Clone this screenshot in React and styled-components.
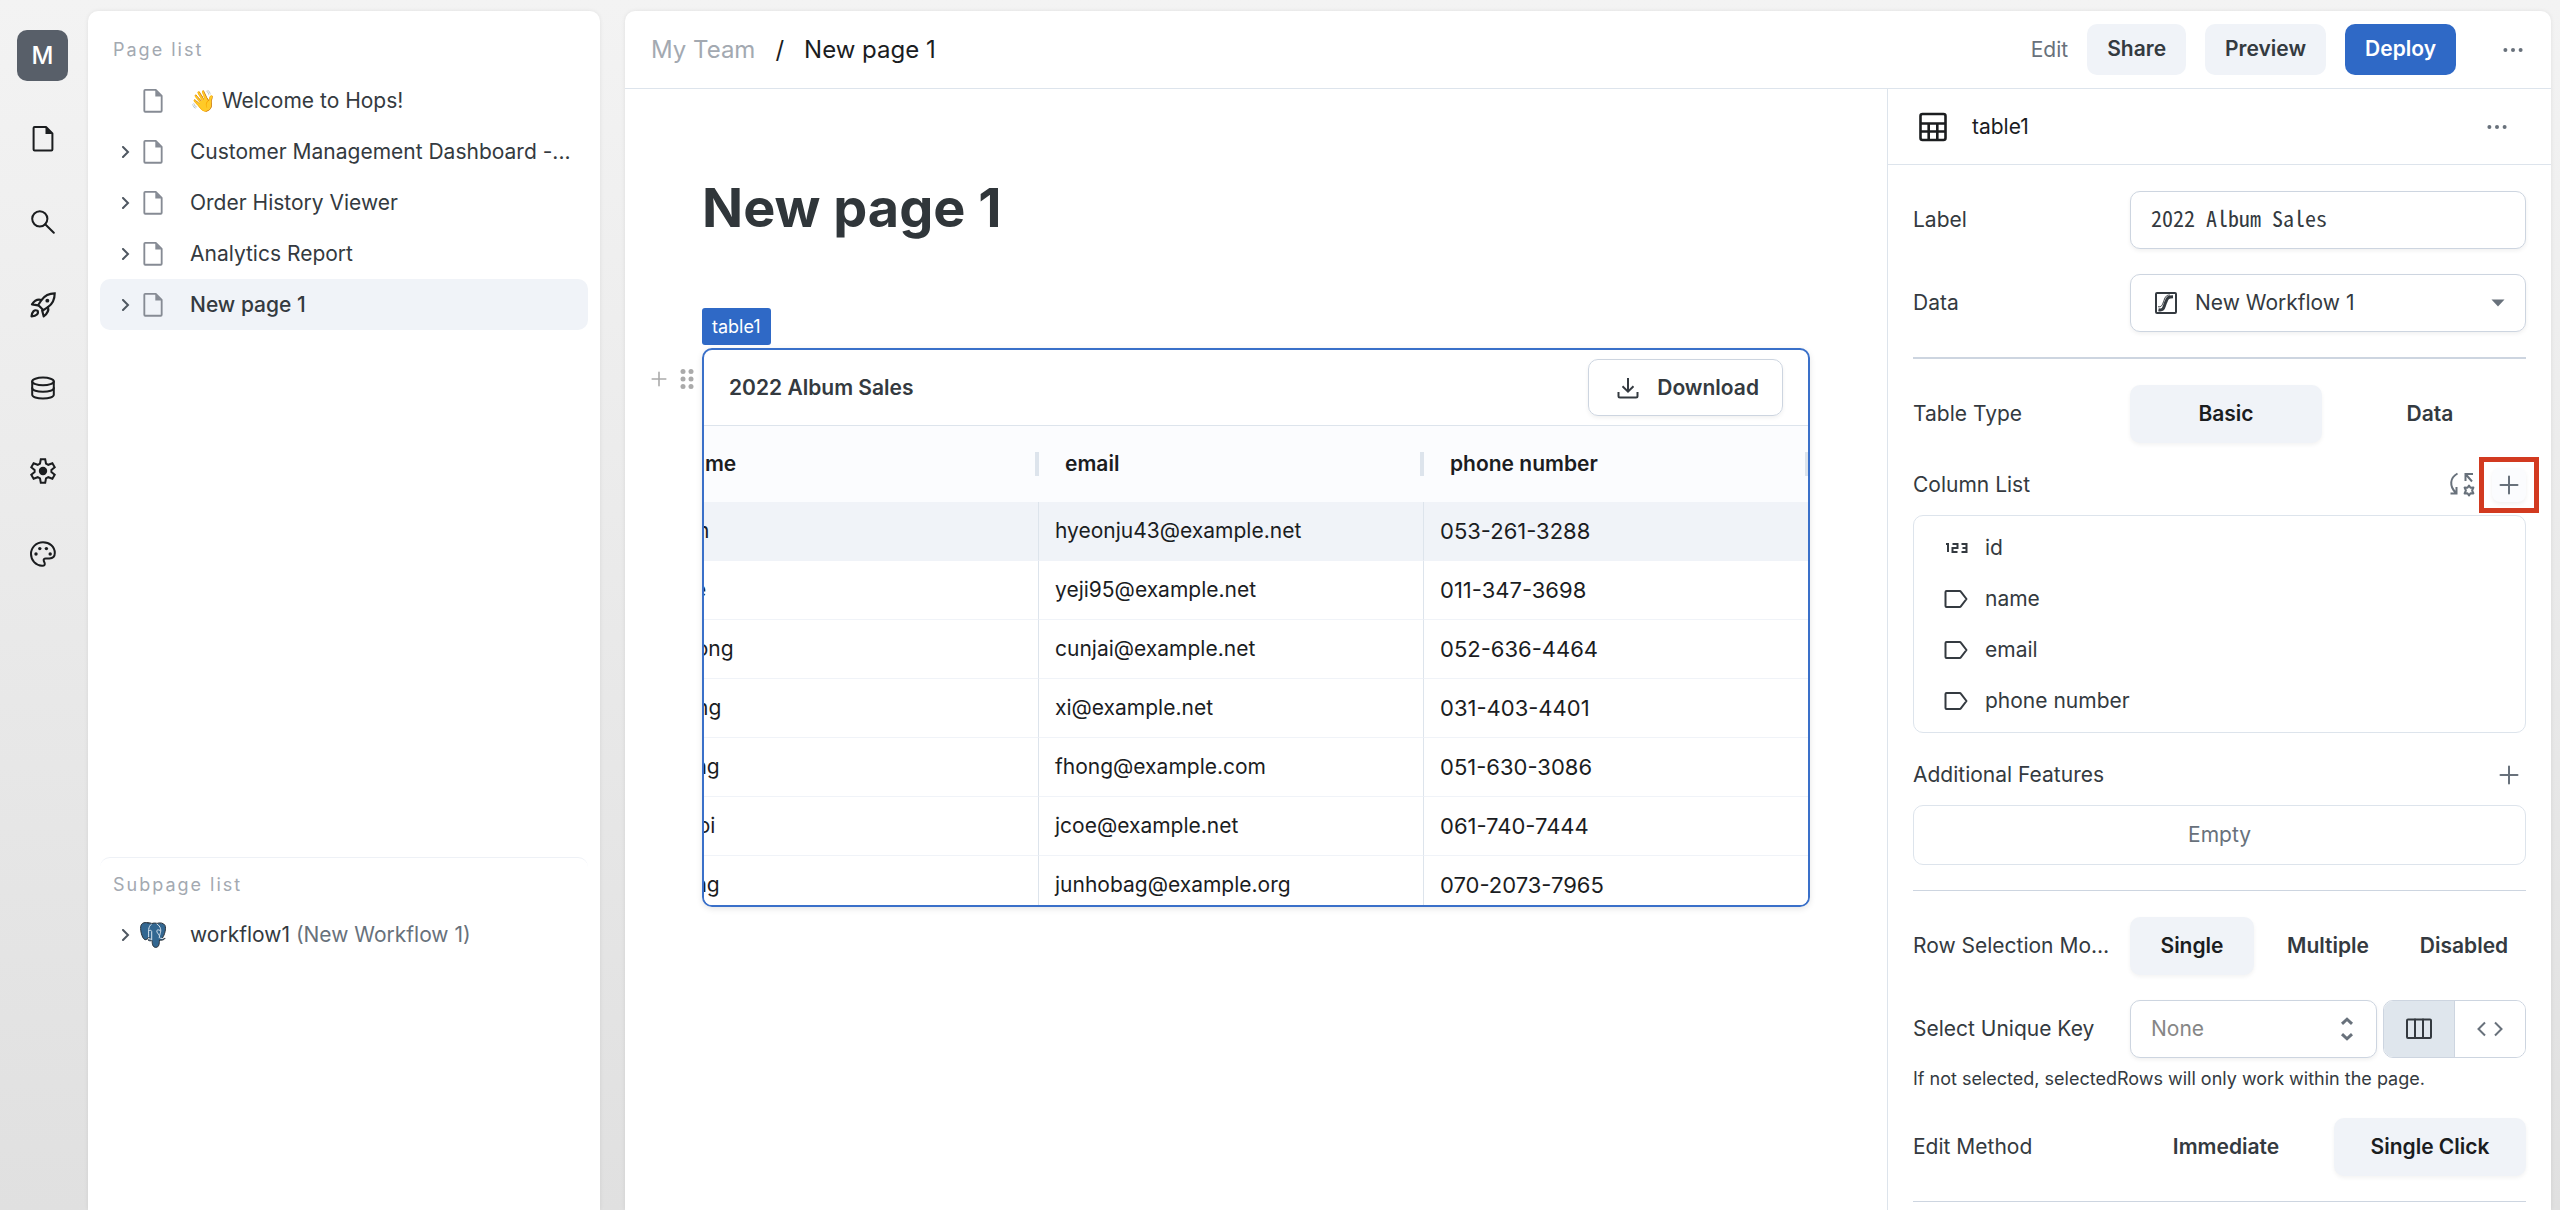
import React from 'react'
import styled, { createGlobalStyle } from 'styled-components'

const GlobalStyle = createGlobalStyle`
  *, *::before, *::after {
    box-sizing: border-box;
  }

  body {
    margin: 0;
    font-family: Inter, "Liberation Sans", sans-serif;
    font-size: 21px;
    line-height: 28px;
    color: #343a40;
  }

  button, input, select {
    margin: 0;
    padding: 0;
    border: 0;
    background: none;
    font: inherit;
    color: inherit;
  }

  svg {
    display: block;
    flex-shrink: 0;
  }
`;

/* icons */

const Icon = ({ size = 24, box = 24, stroke = 2, children }) => (
  <svg
    width={size}
    height={size}
    viewBox={`0 0 ${box} ${box}`}
    fill="none"
    stroke="currentColor"
    strokeWidth={stroke}
    strokeLinejoin="round"
    strokeLinecap="round"
    aria-hidden="true"
  >
    {children}
  </svg>
);

const FileIcon = ({ size = 26, stroke = 2 }) => (
  <Icon size={size} box={26} stroke={stroke}>
    <path d="M4.600 1h11.400l6.400 6.400v16.200q0 1-1 1H4.600q-1 0-1-1V2q0-1 1-1z" />
    <path d="M15.500 1v7h7z" fill="currentColor" stroke="none" />
  </Icon>
);

const SearchIcon = () => (
  <Icon stroke={2}>
    <circle cx="8.800" cy="8.800" r="7.600" />
    <path d="M14.200 14.200l8.600 8.600" />
  </Icon>
);

const RocketIcon = () => (
  <Icon size={26} stroke={2}>
    <path d="M22.800 1.200c-5.600 0-9.200 2-12.200 6.200l-3 4.600 4.800 4.800 4.400-3c4.200-3 6-7 6-12.600z" strokeLinejoin="miter" />
    <path d="M10.400 7.400C7 6.400 4.200 7.800 1.800 11.400l5.600 1" />
    <path d="M16.600 13.800c1 3.200-.4 6-4 8.600l-1.400-5.400" />
    <path d="M7 17.200c-3-1.200-5 .6-5.600 5.400 4.800-.6 6.800-2.600 5.600-5.400z" />
    <circle cx="16" cy="8" r="1.800" fill="currentColor" stroke="none" />
  </Icon>
);

const DatabaseIcon = () => (
  <Icon stroke={2}>
    <ellipse cx="12" cy="5.400" rx="10.800" ry="3.800" />
    <path d="M1.200 5.400v13.400c0 2.200 4.800 3.800 10.800 3.800s10.800-1.600 10.800-3.800V5.400" />
    <path d="M1.200 12c0 2.200 4.800 3.800 10.800 3.800s10.800-1.600 10.800-3.800" />
  </Icon>
);

const GearIcon = () => (
  <Icon size={26} box={26} stroke={2}>
    <path
      strokeLinejoin="miter"
      d="M10.800 1.200h4.400l.8 4.300 2.300 1.300 4.100-1.500 2.300 3.900-3.300 2.700v2.200l3.300 2.700-2.300 3.900-4.100-1.500-2.300 1.300-.8 4.300h-4.400l-.8-4.300-2.300-1.300-4.100 1.500-2.300-3.900 3.300-2.700v-2.200L1.300 9.200l2.300-3.900 4.100 1.500L10 5.500z"
    />
    <circle cx="13" cy="13" r="4.200" fill="currentColor" stroke="none" />
  </Icon>
);

const PaletteIcon = () => (
  <Icon size={26} box={26} stroke={2}>
    <path d="M13 1.200C6.300 1.200 1 6.400 1 13c0 6.200 4.800 11.400 11 11.800 2.400.2 3.200-1.200 2.600-3l-.8-1.800c-.6-1.600.4-2.600 2-2.600h3.600c3.600 0 5.400-2.400 5.400-5.400C24.800 5.800 19.600 1.200 13 1.200z" />
    <g fill="currentColor" stroke="none">
      <circle cx="6" cy="13" r="1.700" />
      <circle cx="9.800" cy="7.600" r="1.700" />
      <circle cx="16.400" cy="7.600" r="1.700" />
      <circle cx="20.200" cy="13" r="1.700" />
    </g>
  </Icon>
);

const ElephantIcon = () => (
  <svg width="26" height="26" viewBox="0 0 26 26" strokeLinejoin="round" strokeLinecap="round" aria-hidden="true">
    <path
      d="M8 .8C3.600-.2.400 1.400.600 6.500c.2 4.500 2 10.500 4.500 11.200 1.500.3 2.600-1.400 3.600-2.400l1.800 1.200c-1.200.6-2.500.6-2.700 1.200.7 1.200 2.700 1.400 4.200.7.300 2.600.2 6.800 3.700 7 3.500-.1 3.500-3.500 3.800-7.400 2 .5 4.700 0 5.600-1.700-.9.300-2.200.3-2.700-.4C24.600 13 26.400 6.500 25 3.400 23.500.8 19.800.4 17 1.400c-1.600-.5-3.600-.5-5 .1C10.800 1 9.500.8 8 .8z"
      fill="#336791"
      stroke="#2b3138"
      strokeWidth="1"
    />
    <path
      d="M11.400 2.200C7.600 4.600 8.800 9.500 8.600 14.800M11.700 18V9.500C11.600 8 9.200 7.800 8.700 9M17 2c4 2.500 4.300 6.500 3.200 9.500-.4 1.500-1 3-1 4.300M19.600 8.200c-1.500-.8-3-.2-2.800 1 .1 1.500 1.600 2.500 2.200 4M20.600 16.300l2.600.3M8.600 16.900l2.500.2"
      fill="none"
      stroke="#dbe6f0"
      strokeWidth="1"
    />
  </svg>
);

const ChevronIcon = () => (
  <Icon size={12} box={12}>
    <path d="M3 1l5 5-5 5" strokeLinejoin="miter" />
  </Icon>
);

const DotsIcon = () => (
  <svg width="20" height="6" viewBox="0 0 20 6" fill="currentColor" aria-hidden="true">
    <circle cx="2.400" cy="3" r="2" />
    <circle cx="10" cy="3" r="2" />
    <circle cx="17.600" cy="3" r="2" />
  </svg>
);

const GripIcon = () => (
  <svg width="14" height="20" viewBox="0 0 14 20" fill="currentColor" aria-hidden="true">
    {[2.500, 10, 17.500].map(y => (
      <g key={y}>
        <circle cx="3" cy={y} r="2.500" />
        <circle cx="11" cy={y} r="2.500" />
      </g>
    ))}
  </svg>
);

const PlusIcon = ({ size = 20 }) => (
  <Icon size={size} box={20} stroke={2}>
    <path d="M10 1.500v17M1.500 10h17" />
  </Icon>
);

const TableIcon = () => (
  <Icon size={30} box={30} stroke={2.600}>
    <rect x="2.500" y="2" width="25" height="26" rx="2" />
    <path d="M2 11.500h26M2 19.500h26M10.700 11.500V28M19.300 11.500V28" strokeLinecap="butt" />
  </Icon>
);

const WorkflowIcon = () => (
  <Icon size={22} box={22} stroke={2}>
    <rect x="1" y="1" width="20" height="20" rx="1" />
    <path d="M3.500 17.800c5.500 1 5-2 7-7s2-6 7.500-6" strokeWidth="3" strokeLinecap="butt" />
    <path d="M3.500 14.800c3 .2 3.500-1 5-5s2-6.800 6-6.800" strokeWidth="1" />
  </Icon>
);

const CaretIcon = () => (
  <svg width="14" height="8" viewBox="0 0 14 8" fill="#68717b" aria-hidden="true">
    <path d="M0.500 0.500h13L7 7.500z" />
  </svg>
);

const UpDownIcon = () => (
  <Icon size={24} stroke={3}>
    <path d="M10 6.800l5-4.600 5 4.600M10 17.200l5 4.600 5-4.600" stroke="#68717b" strokeLinecap="butt" strokeLinejoin="miter" />
  </Icon>
);

const ColumnsIcon = () => (
  <Icon size={26} box={26}>
    <rect x="1" y="3.500" width="24" height="18.500" rx="1" />
    <path d="M9 3.500V22M17 3.500V22" />
  </Icon>
);

const CodeIcon = () => (
  <Icon size={26} box={26} stroke={2}>
    <path d="M8 6.500L1.500 13 8 19.500M18 6.500l6.500 6.500-6.500 6.500" strokeLinejoin="miter" strokeLinecap="butt" />
  </Icon>
);

const DownloadIcon = () => (
  <Icon size={22} box={22}>
    <path d="M11 1v13.500M5.500 9.200L11 14.600l5.500-5.400" strokeLinejoin="miter" strokeLinecap="butt" />
    <path d="M1.500 15v4q0 1.500 1.500 1.500h16q1.500 0 1.500-1.500v-4" strokeLinecap="butt" />
  </Icon>
);

const SyncGearIcon = () => (
  <Icon size={26} box={26} stroke={2}>
    <path d="M8.500 1.500C.5 6 .5 14 6.500 20.500M1.500 21.500H7.500V15" strokeLinejoin="miter" strokeLinecap="butt" />
    <path d="M16.500 9V2H24M16.500 2l6.500 7.500" strokeLinejoin="miter" strokeLinecap="butt" />
    <path d="M20 13.500l1.500 2.300 2.900-.2-1.300 2.900 1.300 2.900-2.900-.2-1.500 2.300-1.500-2.300-2.900.2 1.300-2.900-1.300-2.900 2.900.2z" />
  </Icon>
);

const NumberIcon = () => (
  <Icon size={24}>
    <path d="M2 8h2v8M8.500 8h5v4h-5v4h5M17.500 8h5v8h-5M18.500 12h4" strokeLinecap="butt" strokeLinejoin="miter" />
  </Icon>
);

const TagIcon = () => (
  <Icon size={24}>
    <path d="M2.500 4h13q1 0 1.500.8l5.500 7.200-5.500 7.200q-.5.800-1.500.8h-13q-1 0-1-1V5q0-1 1-1z" />
  </Icon>
);

/* data */

const railItems = [
  ['Pages', FileIcon],
  ['Search', SearchIcon],
  ['Deployments', RocketIcon],
  ['Data sources', DatabaseIcon],
  ['Settings', GearIcon],
  ['Theme', PaletteIcon],
];

const pages = [
  { title: '👋 Welcome to Hops!', leaf: true },
  { title: 'Customer Management Dashboard -...' },
  { title: 'Order History Viewer' },
  { title: 'Analytics Report' },
  { title: 'New page 1', active: true },
];

const columns = ['id', 'name', 'email', 'phone number'];

const rows = [
  [1, 'Ahn', 'hyeonju43@example.net', '053-261-3288'],
  [2, 'Lee', 'yeji95@example.net', '011-347-3698'],
  [3, 'Seong', 'cunjai@example.net', '052-636-4464'],
  [4, 'Song', 'xi@example.net', '031-403-4401'],
  [5, 'Jung', 'fhong@example.com', '051-630-3086'],
  [6, 'Choi', 'jcoe@example.net', '061-740-7444'],
  [7, 'Jung', 'junhobag@example.org', '070-2073-7965'],
];

/* components */

const Segments = ({ label, options, value }) => (
  <Field>
    <FieldLabel as="span">{label}</FieldLabel>
    <SegmentGroup role="group" aria-label={label}>
      {options.map(option => (
        <Segment key={option} type="button" $active={option === value} aria-pressed={option === value}>
          {option}
        </Segment>
      ))}
    </SegmentGroup>
  </Field>
);

const Sidebar = () => (
  <SidebarPanel>
    <SidebarSection $grow={12}>
      <SidebarTitle>Page list</SidebarTitle>
      {pages.map(page => (
        <PageLink key={page.title} href="#" $active={page.active}>
          <span>{!page.leaf && <ChevronIcon />}</span>
          <PageIcon><FileIcon size={24} /></PageIcon>
          <PageName>{page.title}</PageName>
        </PageLink>
      ))}
    </SidebarSection>
    <SidebarSection $grow={5} $bordered>
      <SidebarTitle>Subpage list</SidebarTitle>
      <PageLink href="#">
        <ChevronIcon />
        <PageIcon><ElephantIcon /></PageIcon>
        <PageName>workflow1 <Muted>(New Workflow 1)</Muted></PageName>
      </PageLink>
    </SidebarSection>
  </SidebarPanel>
);

const DataTable = () => (
  <TableViewport>
    <Table>
      <thead>
        <tr>
          {columns.map(column => (
            <HeadCell key={column} scope="col">
              <HeadContent>
                {column}
                <ResizeHandle />
              </HeadContent>
            </HeadCell>
          ))}
        </tr>
      </thead>
      <tbody>
        {rows.map((row, index) => (
          <Row key={row[0]} $selected={index === 0}>
            {row.map(value => <Cell key={value}>{value}</Cell>)}
          </Row>
        ))}
      </tbody>
    </Table>
  </TableViewport>
);

const Canvas = () => (
  <CanvasArea>
    <PageTitle>New page 1</PageTitle>
    <BlockTag>table1</BlockTag>
    <Block>
      <BlockTools>
        <ToolButton type="button" aria-label="Add block"><PlusIcon size={16} /></ToolButton>
        <ToolButton type="button" aria-label="Move block"><GripIcon /></ToolButton>
      </BlockTools>
      <BlockFrame>
        <BlockHeader>
          <BlockTitle>2022 Album Sales</BlockTitle>
          <DownloadButton type="button">
            <DownloadIcon />
            Download
          </DownloadButton>
        </BlockHeader>
        <DataTable />
      </BlockFrame>
    </Block>
  </CanvasArea>
);

const Inspector = () => (
  <InspectorPanel>
    <InspectorHeader>
      <TableIcon />
      <InspectorName>table1</InspectorName>
      <DotsButton type="button" aria-label="Component menu"><DotsIcon /></DotsButton>
    </InspectorHeader>
    <InspectorBody>
      <Section $line={2}>
        <Field>
          <FieldLabel htmlFor="label">Label</FieldLabel>
          <Control>
            <MonoInput id="label" defaultValue="2022 Album Sales" />
          </Control>
        </Field>
        <Field>
          <FieldLabel htmlFor="data">Data</FieldLabel>
          <Control>
            <WorkflowIcon />
            <Select id="data" $inset>
              <option>New Workflow 1</option>
            </Select>
            <CaretIcon />
          </Control>
        </Field>
      </Section>

      <Section $line={1}>
        <Segments label="Table Type" options={['Basic', 'Data']} value="Basic" />
        <Group>
          <GroupHeader>
            <GroupTitle>Column List</GroupTitle>
            <IconButton type="button" aria-label="Sync columns"><SyncGearIcon /></IconButton>
            <IconButton type="button" aria-label="Add column" $raised $marked><PlusIcon /></IconButton>
          </GroupHeader>
          <ColumnList>
            {columns.map(column => (
              <ColumnItem key={column}>
                {column === 'id' ? <NumberIcon /> : <TagIcon />}
                {column}
              </ColumnItem>
            ))}
          </ColumnList>
        </Group>
        <Group>
          <GroupHeader>
            <GroupTitle>Additional Features</GroupTitle>
            <IconButton type="button" aria-label="Add feature"><PlusIcon /></IconButton>
          </GroupHeader>
          <EmptyBox>Empty</EmptyBox>
        </Group>
      </Section>

      <Section $line={1}>
        <Segments label="Row Selection Mode" options={['Single', 'Multiple', 'Disabled']} value="Single" />
        <div>
          <Field>
            <FieldLabel htmlFor="unique-key">Select Unique Key</FieldLabel>
            <KeyControls>
              <Control $grow>
                <Select id="unique-key" $placeholder>
                  <option>None</option>
                </Select>
                <UpDownIcon />
              </Control>
              <ModeToggle>
                <ModeButton type="button" aria-label="Column" aria-pressed="true" $active><ColumnsIcon /></ModeButton>
                <ModeButton type="button" aria-label="Code" aria-pressed="false"><CodeIcon /></ModeButton>
              </ModeToggle>
            </KeyControls>
          </Field>
          <Help>If not selected, selectedRows will only work within the page.</Help>
        </div>
        <Segments label="Edit Method" options={['Immediate', 'Single Click']} value="Single Click" />
      </Section>
    </InspectorBody>
  </InspectorPanel>
);

export const App = () => {
  return (
    <Shell>
      <GlobalStyle />
      <Rail>
        <Avatar type="button">M</Avatar>
        {railItems.map(([name, Glyph]) => (
          <RailButton key={name} type="button" aria-label={name}>
            <Glyph />
          </RailButton>
        ))}
      </Rail>
      <Sidebar />
      <Main>
        <TopBar>
          <Breadcrumb aria-label="Breadcrumb">
            <Crumb href="#">My Team</Crumb>
            <span>/</span>
            <span>New page 1</span>
          </Breadcrumb>
          <Mode>Edit</Mode>
          <ActionButton type="button">Share</ActionButton>
          <ActionButton type="button">Preview</ActionButton>
          <ActionButton type="button" $primary>Deploy</ActionButton>
          <TopDots>
            <DotsButton type="button" aria-label="Page menu"><DotsIcon /></DotsButton>
          </TopDots>
        </TopBar>
        <Workspace>
          <Canvas />
          <Inspector />
        </Workspace>
      </Main>
    </Shell>
  );
}

/* shell */

const Shell = styled.div`
  display: flex;
  height: 100vh;
  padding: 11px 9px 0 0;
  overflow: hidden;
  background: linear-gradient(#f3f3f3, #e0e0e0);
`;

const Rail = styled.nav`
  display: flex;
  flex-direction: column;
  align-items: center;
  flex-shrink: 0;
  width: 88px;
  padding: 19px 3px 0 0;
`;

const Avatar = styled.button`
  width: 51px;
  height: 51px;
  margin-bottom: 16px;
  border-radius: 10px;
  background: #585f69;
  color: #fff;
  font-size: 24px;
  font-weight: 500;
`;

const RailButton = styled.button`
  display: flex;
  align-items: center;
  justify-content: center;
  width: 51px;
  height: 83px;
  color: #1b1d1f;
`;

/* sidebar */

const SidebarPanel = styled.aside`
  display: flex;
  flex-direction: column;
  flex-shrink: 0;
  width: 512px;
  margin-right: 25px;
  border-radius: 10px 10px 0 0;
  background: #fff;
  box-shadow: 0 0 4px rgba(0, 0, 0, .08);
`;

const SidebarSection = styled.section`
  flex: ${props => props.$grow} 1 0;
  margin: 0 12px;
  border-top: ${props => props.$bordered ? '1px solid #eef1f6' : '0'};
  border-radius: 10px;
`;

const SidebarTitle = styled.h2`
  margin: 0;
  padding: 27px 13px 13px;
  font-size: 18px;
  font-weight: 400;
  line-height: 24px;
  letter-spacing: 2px;
  color: #a3a9b1;

  ${SidebarSection} + ${SidebarSection} & {
    padding-top: 15px;
  }
`;

const PageLink = styled.a`
  display: grid;
  grid-template-columns: 20px 50px 1fr;
  align-items: center;
  height: 51px;
  padding: 0 12px 0 20px;
  border-radius: 10px;
  background: ${props => props.$active ? '#f0f3f8' : 'transparent'};
  color: #343a40;
  font-weight: ${props => props.$active ? 500 : 400};
  text-decoration: none;

  svg {
    color: #4f5761;
  }
`;

const PageIcon = styled.span`
  display: flex;
  justify-content: center;
  width: 26px;

  svg {
    color: #868b94;
  }
`;

const PageName = styled.span`
  white-space: nowrap;
`;

const Muted = styled.span`
  color: #68717b;
`;

/* main */

const Main = styled.main`
  display: flex;
  flex-direction: column;
  flex: 1;
  min-width: 0;
  border-radius: 10px 10px 0 0;
  background: #fff;
  box-shadow: 0 0 4px rgba(0, 0, 0, .08);
`;

const TopBar = styled.header`
  display: flex;
  align-items: center;
  gap: 19px;
  flex-shrink: 0;
  height: 78px;
  padding: 0 19px 0 26px;
  border-bottom: 1px solid #dde4ec;
`;

const Breadcrumb = styled.nav`
  display: flex;
  gap: 20px;
  margin-right: auto;
  font-size: 24px;
  color: #1b1d1f;
`;

const Crumb = styled.a`
  color: #a3a9b1;
  text-decoration: none;
`;

const Mode = styled.span`
  color: #68717b;
`;

const ActionButton = styled.button`
  height: 51px;
  padding: 0 20px 2px;
  border-radius: 10px;
  background: ${props => props.$primary ? '#2f69c6' : '#f0f3f8'};
  color: ${props => props.$primary ? '#fff' : '#343a40'};
  font-weight: 600;
`;

const TopDots = styled.div`
  margin-left: 19px;
`;

const DotsButton = styled.button`
  display: flex;
  align-items: center;
  justify-content: center;
  width: 38px;
  height: 38px;
  color: #68717b;
`;

const Workspace = styled.div`
  display: flex;
  flex: 1;
  min-height: 0;
`;

/* canvas */

const CanvasArea = styled.section`
  flex: 1;
  min-width: 0;
  padding: 85px 77px 0 26px;
`;

const PageTitle = styled.h1`
  margin: 0 0 66px 51px;
  font-size: 54px;
  font-weight: 700;
  line-height: 68px;
  color: #30363a;
`;

const BlockTag = styled.div`
  width: max-content;
  margin: 0 0 3px 51px;
  padding: 0 10px;
  border-radius: 3px;
  background: #2f69c6;
  color: #fff;
  font-size: 18px;
  line-height: 37px;
`;

const Block = styled.div`
  display: grid;
  grid-template-columns: 51px minmax(0, 1fr);
`;

const BlockTools = styled.div`
  display: flex;
  align-items: center;
  gap: 13px;
  height: 62px;
`;

const ToolButton = styled.button`
  color: #aaa;
`;

const BlockFrame = styled.div`
  height: 559px;
  border: 2px solid #3a70c9;
  border-radius: 10px;
  overflow: hidden;
  box-shadow: 0 2px 6px rgba(0, 0, 0, .1);
`;

const BlockHeader = styled.div`
  display: flex;
  align-items: center;
  justify-content: space-between;
  height: 76px;
  padding: 0 25px;
  border-bottom: 1px solid #dde4ec;
`;

const BlockTitle = styled.h3`
  margin: 0;
  font-size: 21px;
  font-weight: 600;
`;

const DownloadButton = styled.button`
  display: flex;
  align-items: center;
  gap: 18px;
  height: 57px;
  padding: 0 23px 0 28px;
  border: 1px solid #cdd5e0;
  border-radius: 10px;
  box-shadow: 0 2px 4px rgba(0, 0, 0, .06);
  font-weight: 600;
`;

/* wide table kept scrolled to its last column */
const TableViewport = styled.div`
  display: flex;
  justify-content: flex-end;
  overflow: hidden;
`;

const Table = styled.table`
  flex-shrink: 0;
  table-layout: fixed;
  width: 1540px;
  margin-right: -1px;
  border-spacing: 0;
  color: #1b1d1f;
`;

const HeadCell = styled.th`
  height: 76px;
  padding: 0 0 0 26px;
  background: #fbfcfe;
  font-weight: 600;
  text-align: left;
`;

const HeadContent = styled.div`
  display: flex;
  align-items: center;
  justify-content: space-between;
`;

const ResizeHandle = styled.span`
  width: 4px;
  height: 24px;
  background: #dde4ec;
`;

const Cell = styled.td`
  height: 59px;
  padding: 0 16px;
  border-right: 1px solid #dde4ec;
  border-bottom: 1px solid #f0f3f8;

  &:last-child {
    border-right: 0;
    font-size: 22px;
  }
`;

const Row = styled.tr`
  background: ${props => props.$selected ? '#f0f3f8' : '#fff'};
`;

/* inspector */

const InspectorPanel = styled.aside`
  flex-shrink: 0;
  width: 664px;
  border-left: 1px solid #dde4ec;
  overflow: hidden;
`;

const InspectorHeader = styled.header`
  display: flex;
  align-items: center;
  height: 76px;
  padding: 0 35px 0 30px;
  border-bottom: 1px solid #dde4ec;
  color: #1b1d1f;
`;

const InspectorName = styled.h2`
  flex: 1;
  margin: 0 0 0 24px;
  font-size: 21px;
  font-weight: 400;
`;

const InspectorBody = styled.div`
  padding: 0 25px;
`;

const Section = styled.section`
  display: flex;
  flex-direction: column;
  gap: 25px;
  padding: 26px 0 25px;
  border-bottom: ${props => props.$line}px solid #cdd5e0;
`;

const Field = styled.div`
  display: grid;
  grid-template-columns: 201px minmax(0, 1fr);
  gap: 16px;
  align-items: center;
`;

const FieldLabel = styled.label`
  overflow: hidden;
  text-overflow: ellipsis;
  white-space: nowrap;
`;

const Control = styled.div`
  display: flex;
  align-items: center;
  flex: ${props => props.$grow ? 1 : 'none'};
  min-width: 0;
  height: 58px;
  padding: 0 20px;
  border: 1px solid #cdd5e0;
  border-radius: 10px;
  background: #fff;
  box-shadow: 0 2px 4px rgba(0, 0, 0, .06);

  svg {
    margin-left: 4px;
  }
`;

const MonoInput = styled.input`
  width: 100%;
  padding-bottom: 6px;
  outline: 0;
  font-family: "Noto Sans Mono CJK JP", "Noto Sans Mono CJK SC", "Liberation Mono", monospace;
  font-size: 22px;
`;

const Select = styled.select`
  flex: 1;
  min-width: 0;
  padding-left: ${props => props.$inset ? 18 : 0}px;
  outline: 0;
  appearance: none;
  color: ${props => props.$placeholder ? '#868686' : '#343a40'};
`;

const SegmentGroup = styled.div`
  display: flex;
  gap: 12px;
`;

const Segment = styled.button`
  flex: 1 1 0;
  height: 58px;
  border-radius: 10px;
  background: ${props => props.$active ? '#f0f3f8' : 'transparent'};
  box-shadow: ${props => props.$active ? '0 2px 4px rgba(0, 0, 0, .05)' : 'none'};
  color: ${props => props.$active ? '#1b1d1f' : '#343a40'};
  font-weight: 600;
`;

const Group = styled.div`
  display: flex;
  flex-direction: column;
  gap: 13px;
`;

const GroupHeader = styled.div`
  display: flex;
  align-items: center;
  gap: 13px;
  height: 34px;
`;

const GroupTitle = styled.h3`
  margin: 0 auto 0 0;
  font-size: 21px;
  font-weight: 400;
`;

const IconButton = styled.button`
  position: relative;
  display: flex;
  align-items: center;
  justify-content: center;
  width: 34px;
  height: 34px;
  border-radius: 8px;
  background: ${props => props.$raised ? '#fbfcfe' : 'transparent'};
  box-shadow: ${props => props.$raised ? '0 2px 4px rgba(0, 0, 0, .06)' : 'none'};
  color: #68717b;

  &::after {
    content: "";
    display: ${props => props.$marked ? 'block' : 'none'};
    position: absolute;
    inset: -11px -13px;
    border: 5px solid #d23a20;
  }
`;

const ColumnList = styled.ul`
  margin: 0;
  padding: 6px 30px;
  border: 1px solid #dde4ec;
  border-radius: 10px;
  list-style: none;
`;

const ColumnItem = styled.li`
  display: flex;
  align-items: center;
  gap: 17px;
  height: 51px;
`;

const EmptyBox = styled.div`
  display: flex;
  align-items: center;
  justify-content: center;
  height: 60px;
  border: 1px solid #dde4ec;
  border-radius: 10px;
  color: #68717b;
`;

const KeyControls = styled.div`
  display: flex;
  gap: 6px;
`;

const ModeToggle = styled.div`
  display: flex;
  width: 143px;
  height: 58px;
  border: 1px solid #cdd5e0;
  border-radius: 10px;
  overflow: hidden;
`;

const ModeButton = styled.button`
  display: flex;
  align-items: center;
  justify-content: center;
  flex: 1;
  background: ${props => props.$active ? '#dfe6ed' : '#fff'};
  color: ${props => props.$active ? '#343a40' : '#68717b'};

  & + & {
    border-left: 1px solid #cdd5e0;
  }
`;

const Help = styled.p`
  margin: 7px 0 0;
  font-size: 18px;
`;

export default App;
